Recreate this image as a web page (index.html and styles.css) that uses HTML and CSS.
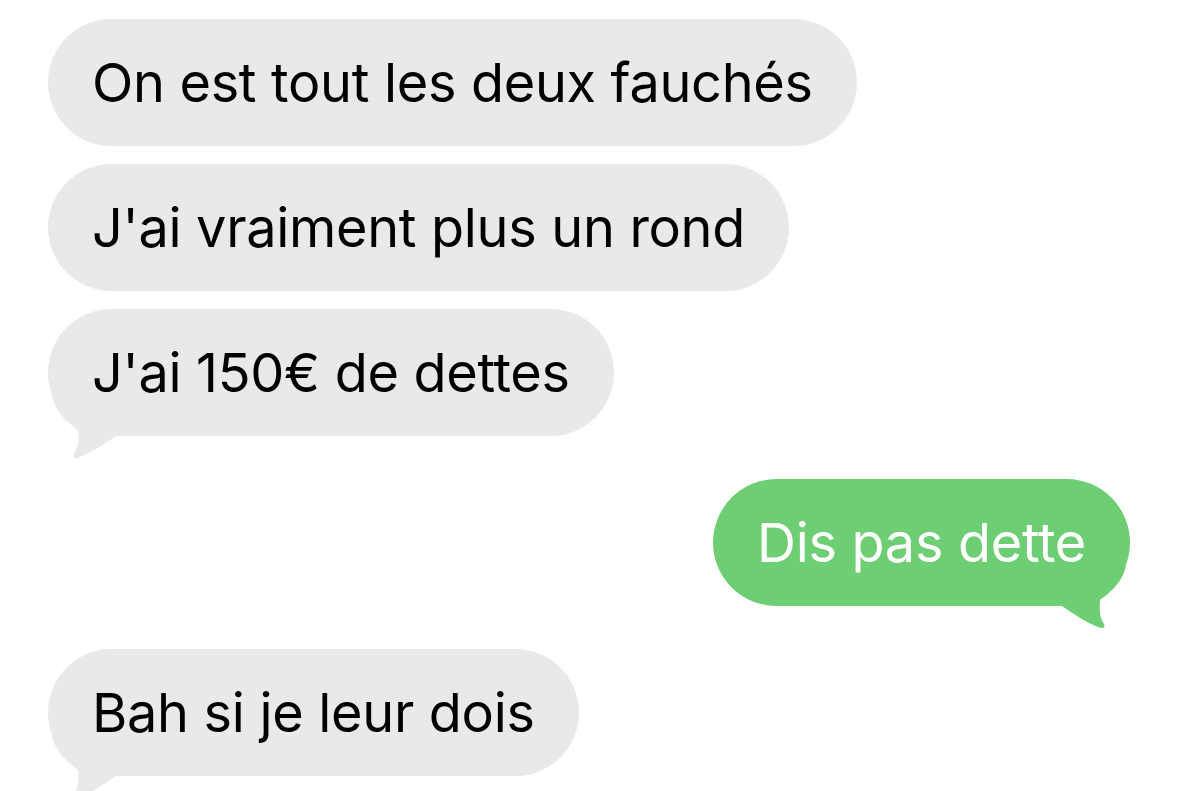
FILE: index.html
```html
<!DOCTYPE html>
<html lang="fr">
<head>
<meta charset="utf-8">
<title>Messages</title>
<link rel="stylesheet" href="styles.css">
</head>
<body>
<div class="thread">
  <div class="bubble in">On est tout les deux fauchés</div>
  <div class="bubble in">J'ai vraiment plus un rond</div>
  <div class="bubble in tail last">J'ai 150€ de dettes
    <svg class="tail-svg" width="70" height="64" viewBox="0 0 70 64"><path d="M4,0 C8,18 22,28 30,34 C31,44 30,52 26,58 C24,62 28,63 32,61 C45,56 56,48 68,40 L68,0 Z"/></svg>
  </div>
  <div class="bubble out tail last">Dis pas dette
    <svg class="tail-svg" width="70" height="64" viewBox="0 0 70 64"><path d="M4,0 C8,18 22,28 30,34 C31,44 30,52 26,58 C24,62 28,63 32,61 C45,56 56,48 68,40 L68,0 Z"/></svg>
  </div>
  <div class="bubble in tail">Bah si je leur dois
    <svg class="tail-svg" width="70" height="64" viewBox="0 0 70 64"><path d="M4,0 C8,18 22,28 30,34 C31,44 30,52 26,58 C24,62 28,63 32,61 C45,56 56,48 68,40 L68,0 Z"/></svg>
  </div>
</div>
</body>
</html>
```
FILE: styles.css
```css
html, body {
  margin: 0;
  padding: 0;
  background: #ffffff;
  overflow: hidden;
  height: 791px;
}
.thread {
  display: flex;
  flex-direction: column;
  gap: 18px;
  padding: 19px 49px 0 48px;
  font-family: Inter, "Open Sans", sans-serif;
}
.bubble {
  position: relative;
  box-sizing: border-box;
  height: 127px;
  display: flex;
  align-items: center;
  padding: 0 44px;
  border-radius: 64px;
  font-size: 54px;
  letter-spacing: -0.3px;
  white-space: nowrap;
}
.bubble.in {
  align-self: flex-start;
  background: #e9e9eb;
  color: #000;
}
.bubble.out {
  align-self: flex-end;
  background: #6dce74;
  color: #fff;
}
.bubble.last {
  margin-bottom: 25px;
}
.tail-svg {
  position: absolute;
  bottom: -24px;
}
.bubble.in .tail-svg {
  left: 0;
  fill: #e9e9eb;
}
.bubble.out .tail-svg {
  right: 0;
  transform: scaleX(-1);
  fill: #6dce74;
}
```
